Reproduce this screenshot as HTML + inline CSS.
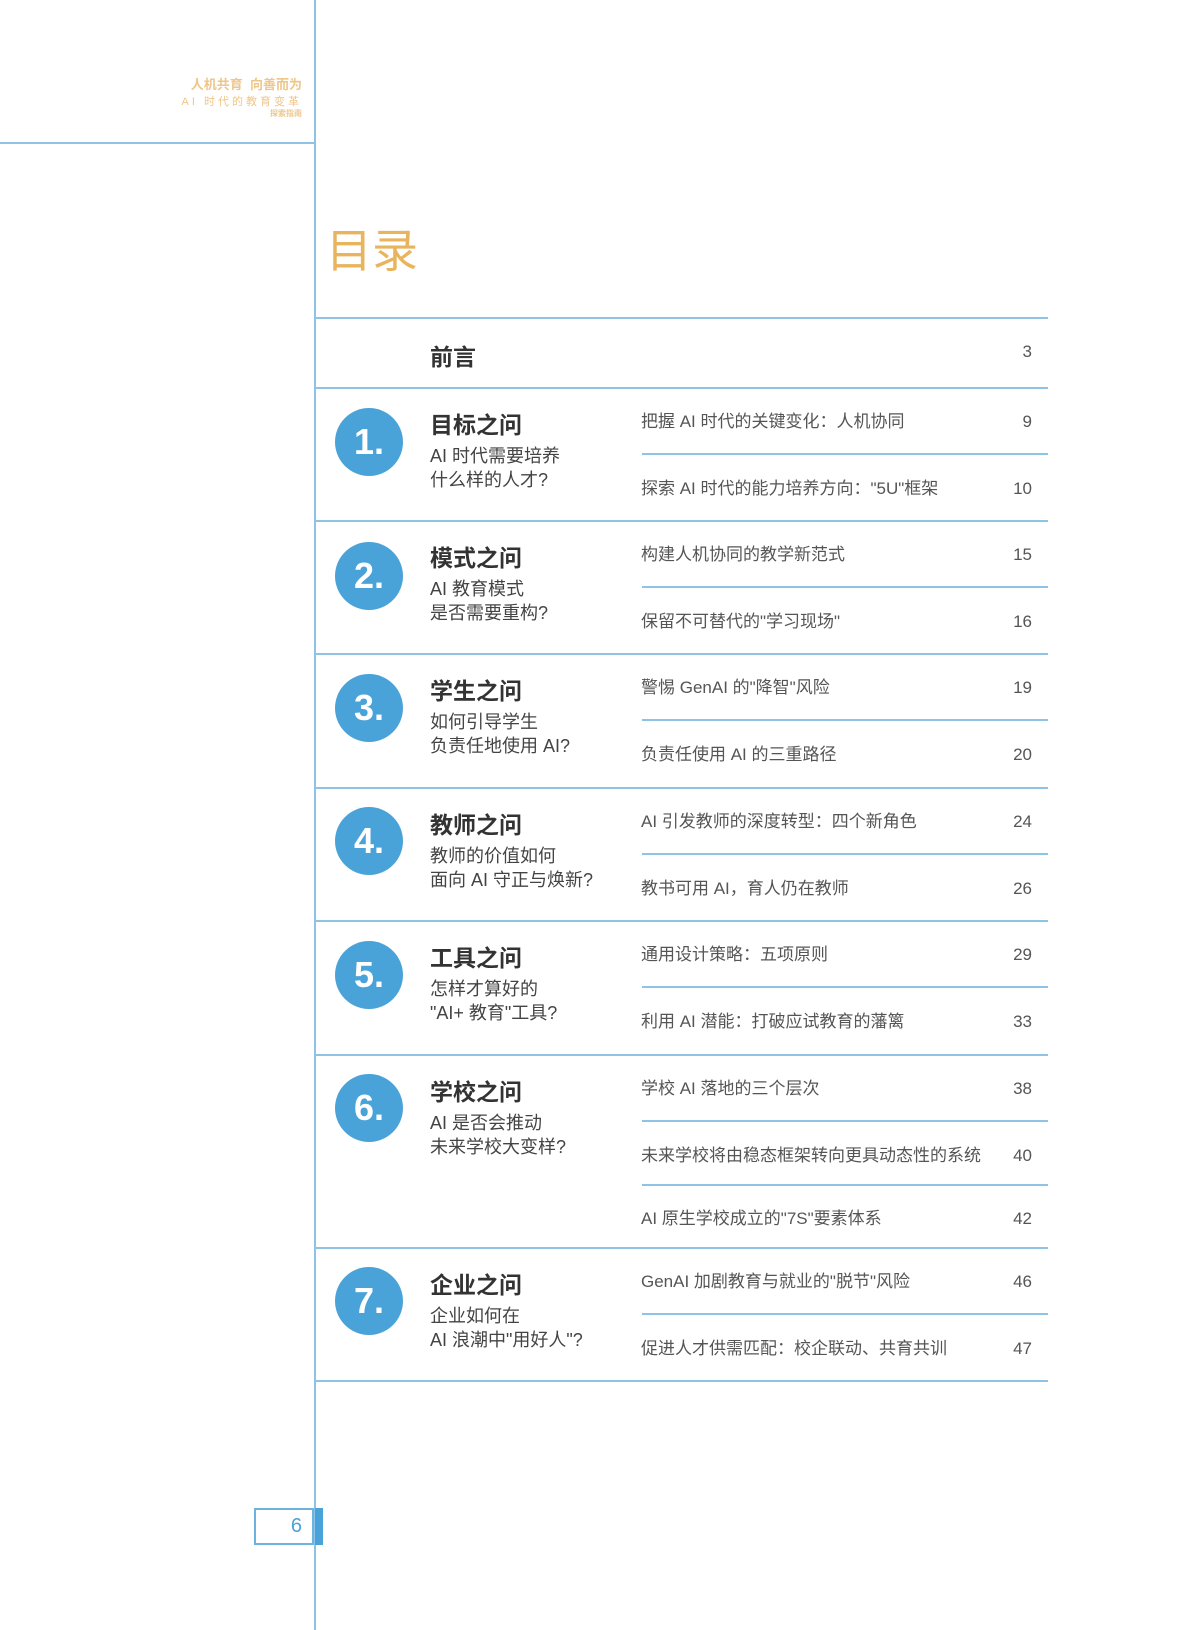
<!DOCTYPE html><html><head><meta charset="utf-8"><style>
body{margin:0;width:1200px;height:1630px;position:relative;background:#fff;font-family:"Liberation Sans","Noto Sans CJK SC",sans-serif;overflow:hidden;color:#3a3a3a}
.a{position:absolute;white-space:nowrap}
.l{position:absolute;background:#8fc3e6;height:2px}
.c{position:absolute;width:68px;height:68px;border-radius:50%;background:#4aa3d8;color:#fff;font-size:36px;font-weight:bold;text-align:center;line-height:68px;left:335px}
.t{font-size:23px;font-weight:bold;color:#333}
.s{font-size:18px;line-height:24px;color:#444}
.e{font-size:17px;color:#555;line-height:24px}
.n{font-size:17px;color:#555;text-align:right;width:60px;left:972px;line-height:24px}
</style></head><body>
<div style="position:absolute;left:314px;top:0;width:2px;height:1630px;background:#8fc3e6"></div>
<div class="l" style="left:0;top:142px;width:315px"></div>
<div class="a" style="right:898px;top:74px;font-size:13px;font-weight:bold;color:#eec68a">人机共育&nbsp; 向善而为</div>
<div class="a" style="right:898px;top:93px;font-size:11px;color:#eec68a;letter-spacing:3px">AI 时代的教育变革</div>
<div class="a" style="right:898px;top:108px;font-size:8px;font-weight:bold;color:#eec68a">探索指南</div>
<div class="a" style="left:326px;top:215px;font-size:46px;color:#e8b45e">目录</div>
<div class="l" style="left:315px;top:317px;width:733px"></div>
<div class="a t" style="left:430px;top:338px">前言</div>
<div class="a n" style="top:340px">3</div>
<div id="rows"></div>
<div style="position:absolute;left:254px;top:1508px;width:60px;height:37px;border:2px solid #6db3e0;box-sizing:border-box;color:#4aa3d8;font-size:20px;text-align:right;padding-right:10px;line-height:33px">6</div>
<div style="position:absolute;left:315px;top:1508px;width:8px;height:37px;background:#4aa3d8"></div>
<script>
var R=[
[387,442,"目标之问","AI 时代需要培养","什么样的人才?",[["把握 AI 时代的关键变化：人机协同","9"],["探索 AI 时代的能力培养方向：\"5U\"框架","10"]]],
[520,576,"模式之问","AI 教育模式","是否需要重构?",[["构建人机协同的教学新范式","15"],["保留不可替代的\"学习现场\"","16"]]],
[653,708,"学生之问","如何引导学生","负责任地使用 AI?",[["警惕 GenAI 的\"降智\"风险","19"],["负责任使用 AI 的三重路径","20"]]],
[787,841,"教师之问","教师的价值如何","面向 AI 守正与焕新?",[["AI 引发教师的深度转型：四个新角色","24"],["教书可用 AI，育人仍在教师","26"]]],
[920,975,"工具之问","怎样才算好的","\"AI+ 教育\"工具?",[["通用设计策略：五项原则","29"],["利用 AI 潜能：打破应试教育的藩篱","33"]]],
[1054,1108,"学校之问","AI 是否会推动","未来学校大变样?",[["学校 AI 落地的三个层次","38"],["未来学校将由稳态框架转向更具动态性的系统","40"],["AI 原生学校成立的\"7S\"要素体系","42"]]],
[1247,1301,"企业之问","企业如何在","AI 浪潮中\"用好人\"?",[["GenAI 加剧教育与就业的\"脱节\"风险","46"],["促进人才供需匹配：校企联动、共育共训","47"]]]
];
var h="";
R.forEach(function(r,i){
h+='<div class="l" style="left:315px;top:'+r[0]+'px;width:733px"></div>';
h+='<div class="c" style="top:'+(r[1]-34)+'px">'+(i+1)+'.</div>';
h+='<div class="a t" style="left:430px;top:'+(r[0]+19)+'px">'+r[2]+'</div>';
h+='<div class="a s" style="left:430px;top:'+(r[0]+57)+'px">'+r[3]+'<br>'+r[4]+'</div>';
r[5].forEach(function(e,j){
var y=r[0]+23+j*66.5;
if(i==5&&j==2)y=r[0]+153;
h+='<div class="a e" style="left:641px;top:'+y+'px">'+e[0]+'</div>';
h+='<div class="a n" style="top:'+y+'px">'+e[1]+'</div>';
if(j>0)h+='<div class="l" style="left:642px;top:'+(r[0]+(i==5&&j==2?130:66))+'px;width:406px"></div>';
});
});
h+='<div class="l" style="left:315px;top:1380px;width:733px"></div>';
document.getElementById("rows").innerHTML=h;
</script>
</body></html>
